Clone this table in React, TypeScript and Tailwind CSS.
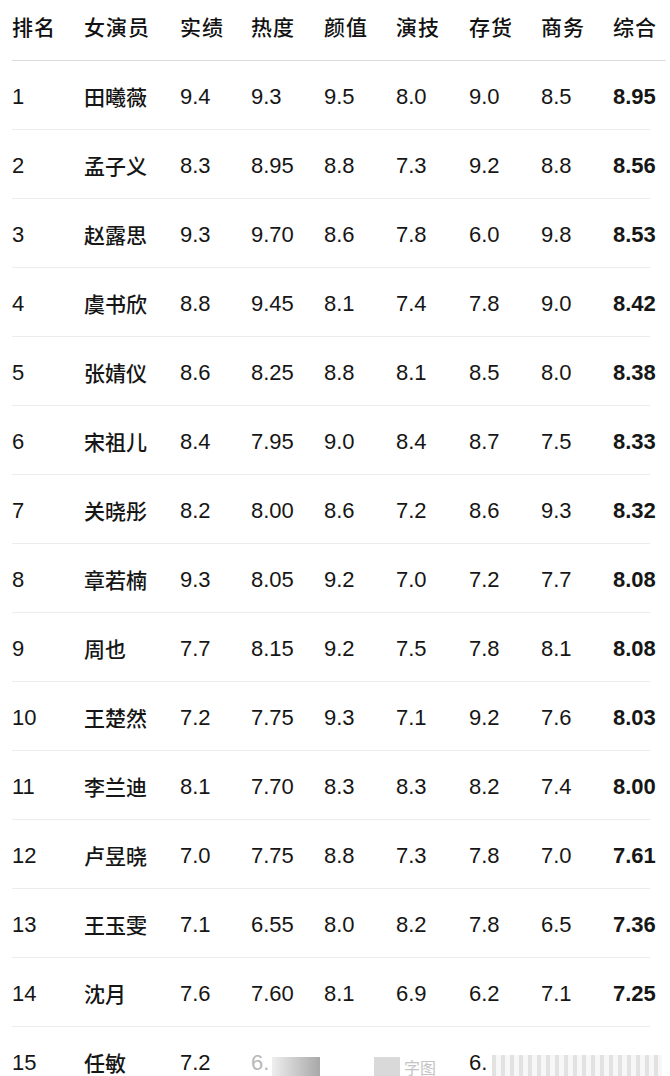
const headers = ["排名", "女演员", "实绩", "热度", "颜值", "演技", "存货", "商务", "综合"];

const rows: string[][] = [
  ["1", "田曦薇", "9.4", "9.3", "9.5", "8.0", "9.0", "8.5", "8.95"],
  ["2", "孟子义", "8.3", "8.95", "8.8", "7.3", "9.2", "8.8", "8.56"],
  ["3", "赵露思", "9.3", "9.70", "8.6", "7.8", "6.0", "9.8", "8.53"],
  ["4", "虞书欣", "8.8", "9.45", "8.1", "7.4", "7.8", "9.0", "8.42"],
  ["5", "张婧仪", "8.6", "8.25", "8.8", "8.1", "8.5", "8.0", "8.38"],
  ["6", "宋祖儿", "8.4", "7.95", "9.0", "8.4", "8.7", "7.5", "8.33"],
  ["7", "关晓彤", "8.2", "8.00", "8.6", "7.2", "8.6", "9.3", "8.32"],
  ["8", "章若楠", "9.3", "8.05", "9.2", "7.0", "7.2", "7.7", "8.08"],
  ["9", "周也", "7.7", "8.15", "9.2", "7.5", "7.8", "8.1", "8.08"],
  ["10", "王楚然", "7.2", "7.75", "9.3", "7.1", "9.2", "7.6", "8.03"],
  ["11", "李兰迪", "8.1", "7.70", "8.3", "8.3", "8.2", "7.4", "8.00"],
  ["12", "卢昱晓", "7.0", "7.75", "8.8", "7.3", "7.8", "7.0", "7.61"],
  ["13", "王玉雯", "7.1", "6.55", "8.0", "8.2", "7.8", "6.5", "7.36"],
  ["14", "沈月", "7.6", "7.60", "8.1", "6.9", "6.2", "7.1", "7.25"],
];

const grid =
  "grid grid-cols-[72px_96px_71px_73px_72px_73px_72px_72px_1fr] pl-[12px]";

const cellClass = (i: number) => {
  if (i === 1) return "font-medium text-[21px]";
  if (i === 8) return "font-bold";
  return "";
};

const App = () => {
  return (
    <div
      className="relative w-[670px] h-[1076px] overflow-hidden bg-white text-[#161616] text-[22px] leading-none"
      style={{ fontFamily: '"Liberation Sans", "Noto Sans CJK SC", sans-serif' }}
    >
      <div className="relative">
        <div className={`${grid} h-[60px] pb-[6px] items-center`}>
          {headers.map((h) => (
            <div key={h} className="font-medium text-[21px] tracking-[1px] text-[#111]">
              {h}
            </div>
          ))}
        </div>
        <div className="ml-[12px] mr-[4px] h-px bg-[#dcdcdc]" />
        {rows.map((r) => (
          <div key={r[0]}>
            <div className={`${grid} h-[68px] pt-[4px] items-center`}>
              {r.map((c, i) => (
                <div key={i} className={cellClass(i)}>
                  {c}
                </div>
              ))}
            </div>
            <div className="ml-[12px] mr-[20px] h-px bg-[#ececec]" />
          </div>
        ))}
        <div className={`${grid} relative h-[68px] pt-[4px] items-center`}>
          <div>15</div>
          <div className="font-medium text-[21px]">任敏</div>
          <div>7.2</div>
          <div className="text-[#b8b8b8]">6.</div>
          <div />
          <div />
          <div>6.</div>
          <div />
          <div />
          <div className="absolute left-[272px] top-[30px] w-[48px] h-[26px] bg-gradient-to-r from-[#eeeeee] to-[#a8a8a8]" />
          <div className="absolute left-[374px] top-[30px] w-[26px] h-[24px] bg-[#d9d9d9]" />
          <div className="absolute left-[404px] top-[34px] text-[16px] text-[#c4c4c4]">字图</div>
          <div className="absolute left-[492px] top-[28px] w-[170px] h-[28px] bg-[repeating-linear-gradient(90deg,#e2e2e2_0px,#e2e2e2_4px,#f7f7f7_4px,#f7f7f7_9px)]" />
        </div>
      </div>
    </div>
  );
};

export default App;
